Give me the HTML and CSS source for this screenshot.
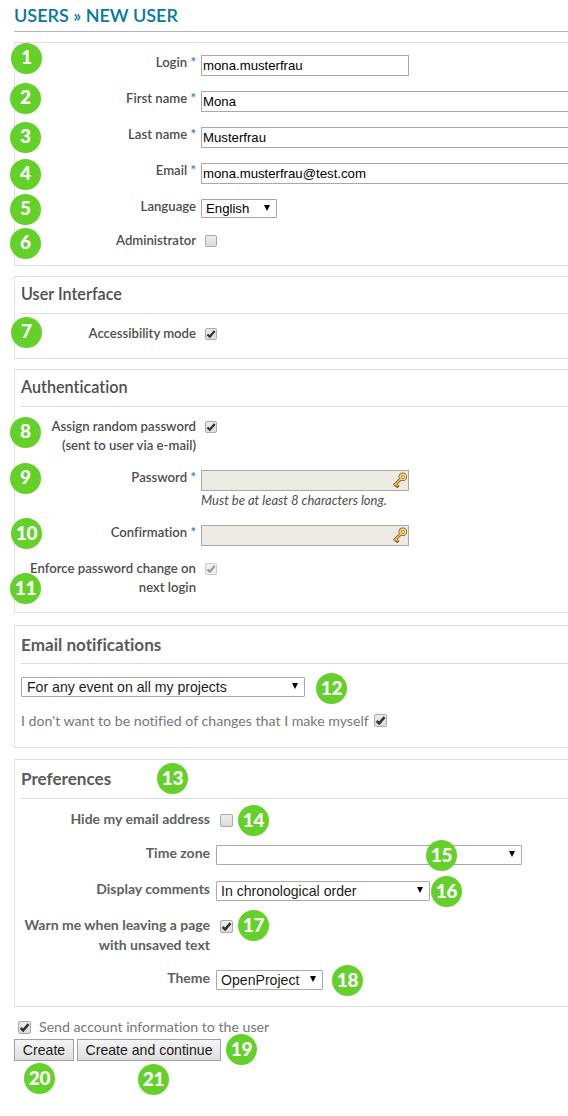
FILE: index.html
```html
<!DOCTYPE html>
<html lang="en">
<head>
<meta charset="utf-8">
<title>New user</title>
<link rel="stylesheet" href="styles.css">
</head>
<body>
<svg class="defs" width="0" height="0">
  <symbol id="tick" viewBox="0 0 12 12"><path d="M2.4 6.5 4.8 8.7 9.7 2.9" fill="none" stroke="currentColor" stroke-width="2.3"/></symbol>
  <symbol id="key" viewBox="0 0 16 16">
    <path d="M8.6 7.2 2 13.6" stroke="#8a5526" stroke-width="3"/>
    <path d="M3 11.8 6.4 15.2" stroke="#8a5526" stroke-width="3.2"/>
    <circle cx="10.8" cy="4.8" r="2.8" fill="none" stroke="#8a5526" stroke-width="3"/>
    <path d="M9 6.8 2.4 13.2M3.8 12.2 5.6 14" stroke="#f3c04e" stroke-width="1.6"/>
    <circle cx="10.8" cy="4.8" r="2.7" fill="none" stroke="#f8d673" stroke-width="1.7"/>
  </symbol>
</svg>
<form class="page">
  <h1 class="title">USERS » NEW USER</h1>

  <section class="box box-user">
    <div class="row"><label class="label">Login <i class="req">*</i></label><div class="field"><input class="input short" value="mona.musterfrau"></div></div>
    <div class="row"><label class="label">First name <i class="req">*</i></label><div class="field"><input class="input" value="Mona"></div></div>
    <div class="row"><label class="label">Last name <i class="req">*</i></label><div class="field"><input class="input" value="Musterfrau"></div></div>
    <div class="row"><label class="label">Email <i class="req">*</i></label><div class="field"><input class="input mail" value="mona.musterfrau@test.com"></div></div>
    <div class="row row-lang"><label class="label">Language</label><div class="field"><div class="select lang">English</div></div></div>
    <div class="row"><label class="label">Administrator</label><div class="field"><span class="check"></span></div></div>
  </section>

  <section class="box box-ui">
    <h2 class="heading">User Interface</h2>
    <div class="row"><label class="label access">Accessibility mode</label><div class="field"><span class="check"><svg><use href="#tick"/></svg></span></div></div>
  </section>

  <section class="box box-auth">
    <h2 class="heading">Authentication</h2>
    <div class="row row-random"><label class="label">Assign random password<br>(sent to user via e-mail)</label><div class="field"><span class="check"><svg><use href="#tick"/></svg></span></div></div>
    <div class="row row-pass"><label class="label">Password <i class="req">*</i></label><div class="field"><div class="locked"><svg class="key"><use href="#key"/></svg></div><em class="hint">Must be at least 8 characters long.</em></div></div>
    <div class="row"><label class="label">Confirmation <i class="req">*</i></label><div class="field"><div class="locked"><svg class="key"><use href="#key"/></svg></div></div></div>
    <div class="row"><label class="label">Enforce password change on<br>next login</label><div class="field"><span class="check off"><svg><use href="#tick"/></svg></span></div></div>
  </section>

  <section class="box box-mail scaled">
    <h2 class="heading">Email notifications</h2>
    <div class="select events">For any event on all my projects</div>
    <div class="line"><span class="plain self">I don't want to be notified of changes that I make myself</span><span class="check"><svg><use href="#tick"/></svg></span></div>
  </section>

  <section class="box box-pref scaled">
    <h2 class="heading">Preferences</h2>
    <div class="row row-hide"><label class="label">Hide my email address</label><div class="field"><span class="check"></span></div></div>
    <div class="row"><label class="label">Time zone</label><div class="field"><div class="select zone"></div></div></div>
    <div class="row"><label class="label">Display comments</label><div class="field"><div class="select order">In chronological order</div></div></div>
    <div class="row row-warn"><label class="label">Warn me when leaving a page<br>with unsaved text</label><div class="field"><span class="check"><svg><use href="#tick"/></svg></span></div></div>
    <div class="row"><label class="label">Theme</label><div class="field"><div class="select theme">OpenProject</div></div></div>
  </section>

  <div class="send scaled"><span class="check"><svg><use href="#tick"/></svg></span><span class="plain info">Send account information to the user</span></div>
  <div class="actions"><button type="button" class="btn create">Create</button><button type="button" class="btn continue">Create and continue</button></div>

  <b class="pin p1">1</b><b class="pin p2">2</b><b class="pin p3">3</b><b class="pin p4">4</b><b class="pin p5">5</b><b class="pin p6">6</b><b class="pin p7">7</b><b class="pin p8">8</b><b class="pin p9">9</b>
  <b class="pin p10">10</b><b class="pin p11">11</b><b class="pin p12">12</b><b class="pin p13">13</b><b class="pin p14">14</b><b class="pin p15">15</b><b class="pin p16">16</b><b class="pin p17">17</b><b class="pin p18">18</b><b class="pin p19">19</b><b class="pin p20">20</b><b class="pin p21">21</b>
</form>
</body>
</html>
```
FILE: styles.css
```css
* { box-sizing: border-box; }
body { margin: 0; background: #fff; font-family: Lato, sans-serif; font-variant-ligatures: none; color: #4d4d4d; }
.defs { position: absolute; }
.page { position: relative; height: 1116px; padding-left: 14px; overflow: hidden; }
.title { margin: 0 0 10px; height: 32px; border-bottom: 1px solid #b5b5b5; font-family: "Lato Semibold", Lato, sans-serif; font-size: 18px; line-height: 30px; font-weight: 600; color: #06799f; white-space: nowrap; }
.box { width: 600px; border: 1px solid #e0e0e0; padding-left: 6px; }
.box-user { height: 224px; padding-top: 10px; margin-bottom: 10px; }
.box-ui { height: 83px; margin-bottom: 10px; }
.box-auth { height: 244px; margin-bottom: 12px; }
.box-mail { height: 123px; margin-bottom: 11px; }
.box-pref { height: 248px; margin-bottom: 13px; }
.heading { margin: 0 0 10px; height: 37px; border-bottom: 1px solid #ddd; font-family: "Lato Semibold", Lato, sans-serif; font-size: 16.2px; line-height: 34px; font-weight: 600; }
.row { display: flex; gap: 5px; height: 36px; }
.row-lang { height: 34px; }
.row-random { height: 51px; }
.row-pass { height: 55px; }
.label { width: 175px; flex: none; text-align: right; font-family: "Lato Semibold", Lato, sans-serif; font-size: 13.15px; line-height: 19px; font-weight: 600; white-space: nowrap; }
.req { font-style: normal; font-weight: 400; color: #2f7bbd; }
.field { flex: 1; padding-top: 2px; }
.input { display: block; width: 420px; height: 21px; padding: 0 1px; border: 1px solid #a9a9a9; font: 13.2px "Liberation Sans", Arial, sans-serif; color: #000; outline: 0; }
.short { width: 208px; }
.select { position: relative; height: 19px; padding-left: 4px; border: 1px solid #a6a6a6; border-radius: 1px; font: 13.2px/17px "Liberation Sans", Arial, sans-serif; color: #000; white-space: nowrap; }
.select::after { content: ""; position: absolute; right: 6px; top: 5px; border: solid transparent; border-width: 6px 3.5px 0; border-top-color: #000; }
.lang { width: 76px; }
.check { display: block; width: 12px; height: 12px; margin: 2px 0 0 4px; border: 1px solid #aaa; border-radius: 2px; background: linear-gradient(#ececec, #dcdcdc); color: #333; }
.check svg { display: block; width: 12px; height: 12px; margin: -1px; }
.off { border-color: #ccc; color: #999; background: #f0f0f0; }
.locked { display: flex; justify-content: flex-end; width: 208px; height: 21px; border: 1px solid #a9a9a9; background: #ebebe4; }
.key { width: 16px; height: 16px; margin: 1px 0 0; }
.hint { display: block; font-size: 13px; line-height: 18px; }
.scaled .heading { height: 38px; line-height: 37px; font-weight: 700; font-family: Lato, sans-serif; font-size: 17.1px; margin-bottom: 13px; color: #5a5a5a; }
.scaled .label { width: 189px; line-height: 20px; font-family: Lato, sans-serif; font-weight: 700; font-size: 14px; color: #606060; }
.scaled .field { padding-left: 1px; }
.scaled .select { height: 20px; line-height: 19px; border-color: #aaa; font-size: 14.1px; color: #1c1c1c; }
.scaled .check { width: 13px; height: 13px; margin-top: 3px; }
.scaled .check svg { width: 13px; height: 13px; }
.scaled .events { width: 284px; padding-left: 5px; }
.line { display: flex; align-items: center; margin-top: 14px; }
.plain { font-size: 14.15px; line-height: 19px; color: #777; white-space: nowrap; }
.line .check, .send .check { margin-top: 0; }
.box-mail .line .check { margin-left: 5px; }
.box-pref .heading { height: 39px; margin-bottom: 10px; }
.box-pref .row-hide { height: 34px; }
.box-pref .row-warn { height: 53px; }
.zone { width: 306px; }
.order { width: 214px; }
.theme { width: 107px; }
.send { display: flex; align-items: center; height: 14px; gap: 8px; margin-bottom: 5px; }
.info { margin-top: -2px; }
.actions { display: flex; gap: 3px; }
.btn { height: 22px; padding: 0; border: 1px solid #a0a0a0; background: linear-gradient(#f5f5f5, #dedede); font: 14.1px/18px "Liberation Sans", Arial, sans-serif; color: #1c1c1c; white-space: nowrap; }
.create { width: 60px; }
.continue { width: 144px; }
.pin { position: absolute; width: 31px; height: 31px; border-radius: 50%; background: #64d12b; color: #fff; font: 900 19px/28px Lato, sans-serif; text-align: center; }
.p1 { left: 11px; top: 43px; }
.p2 { left: 10px; top: 83px; }
.p3 { left: 10px; top: 122px; }
.p4 { left: 10px; top: 159px; }
.p5 { left: 10px; top: 194px; }
.p6 { left: 10px; top: 228px; }
.p7 { left: 11px; top: 317px; }
.p8 { left: 10px; top: 417px; }
.p9 { left: 10px; top: 463px; }
.p10 { left: 11px; top: 518px; }
.p11 { left: 10px; top: 573px; }
.p12 { left: 316px; top: 673px; }
.p13 { left: 157px; top: 763px; }
.p14 { left: 238px; top: 805px; }
.p15 { left: 426px; top: 840px; }
.p16 { left: 431px; top: 876px; }
.p17 { left: 238px; top: 910px; }
.p18 { left: 332px; top: 965px; }
.p19 { left: 226px; top: 1034px; }
.p20 { left: 24px; top: 1063px; }
.p21 { left: 138px; top: 1064px; }
.p10, .p11, .p12, .p13, .p14, .p15, .p16, .p17, .p18, .p19, .p20, .p21 { line-height: 30px; letter-spacing: -0.3px; }
```
